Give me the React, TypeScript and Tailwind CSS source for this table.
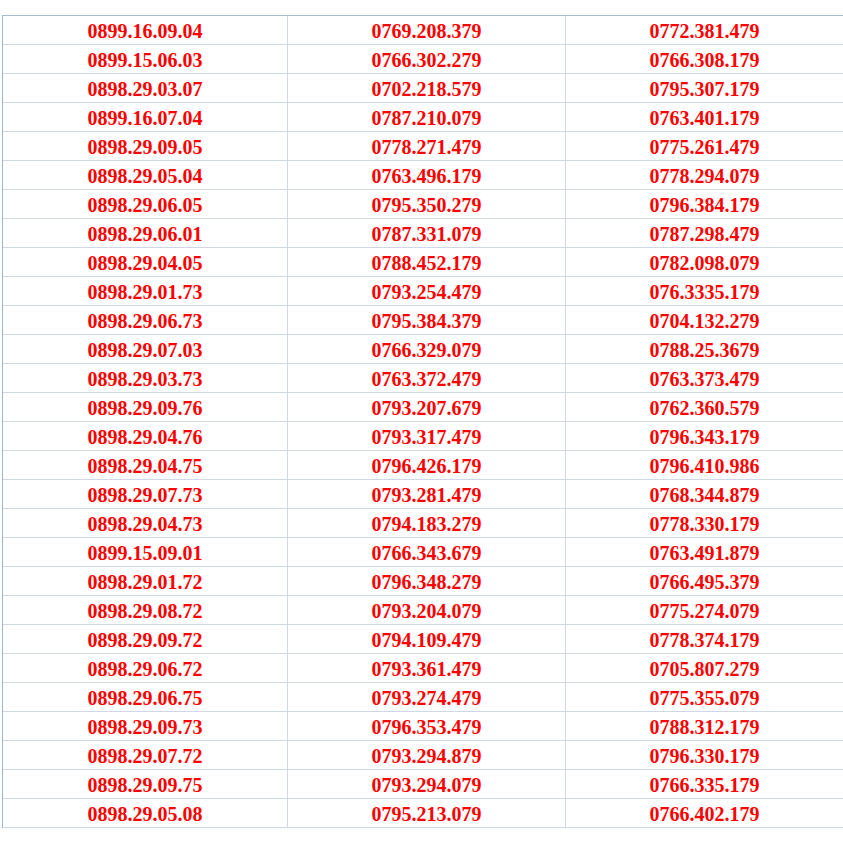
const rows: [string, string, string][] = [
	['0899.16.09.04', '0769.208.379', '0772.381.479'],
	['0899.15.06.03', '0766.302.279', '0766.308.179'],
	['0898.29.03.07', '0702.218.579', '0795.307.179'],
	['0899.16.07.04', '0787.210.079', '0763.401.179'],
	['0898.29.09.05', '0778.271.479', '0775.261.479'],
	['0898.29.05.04', '0763.496.179', '0778.294.079'],
	['0898.29.06.05', '0795.350.279', '0796.384.179'],
	['0898.29.06.01', '0787.331.079', '0787.298.479'],
	['0898.29.04.05', '0788.452.179', '0782.098.079'],
	['0898.29.01.73', '0793.254.479', '076.3335.179'],
	['0898.29.06.73', '0795.384.379', '0704.132.279'],
	['0898.29.07.03', '0766.329.079', '0788.25.3679'],
	['0898.29.03.73', '0763.372.479', '0763.373.479'],
	['0898.29.09.76', '0793.207.679', '0762.360.579'],
	['0898.29.04.76', '0793.317.479', '0796.343.179'],
	['0898.29.04.75', '0796.426.179', '0796.410.986'],
	['0898.29.07.73', '0793.281.479', '0768.344.879'],
	['0898.29.04.73', '0794.183.279', '0778.330.179'],
	['0899.15.09.01', '0766.343.679', '0763.491.879'],
	['0898.29.01.72', '0796.348.279', '0766.495.379'],
	['0898.29.08.72', '0793.204.079', '0775.274.079'],
	['0898.29.09.72', '0794.109.479', '0778.374.179'],
	['0898.29.06.72', '0793.361.479', '0705.807.279'],
	['0898.29.06.75', '0793.274.479', '0775.355.079'],
	['0898.29.09.73', '0796.353.479', '0788.312.179'],
	['0898.29.07.72', '0793.294.879', '0796.330.179'],
	['0898.29.09.75', '0793.294.079', '0766.335.179'],
	['0898.29.05.08', '0795.213.079', '0766.402.179'],
];

// ô số điện thoại, căn giữa như Excel
const Cell: React.FC<{ value: string; className: string }> = ({ value, className }) => (
	<div className={`flex items-center justify-center pt-[1px] ${className}`}>
		{value}
	</div>
);

export default function App() {
	return (
		<div className="w-[843px] h-[843px] overflow-hidden bg-white pt-[15px] pl-[2px]">
			<div className="border-t border-l border-t-[#a9bad0] border-l-[#9fb5d2] font-['Times_New_Roman','Liberation_Serif',serif] font-bold text-[20px] leading-[28px] text-[#ff0000]">
				{rows.map((r, i) => (
					<div key={i} className="flex h-[29px] border-b border-[#d0d7e5]">
						<Cell value={r[0]} className="w-[285px] border-r border-[#d0d7e5]" />
						<Cell value={r[1]} className="w-[278px] border-r border-[#d0d7e5]" />
						<Cell value={r[2]} className="flex-1" />
					</div>
				))}
			</div>
		</div>
	);
}
